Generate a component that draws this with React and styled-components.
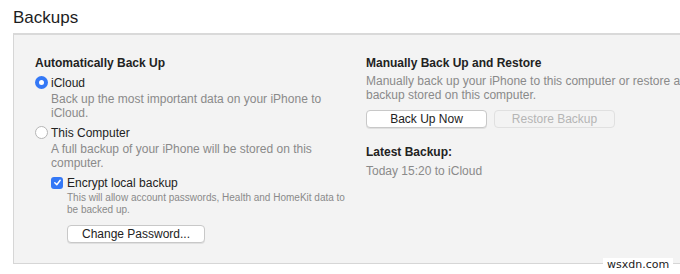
import React from "react";
import styled, { createGlobalStyle } from "styled-components";

const GlobalStyle = createGlobalStyle`
  html, body {
    margin: 0;
    padding: 0;
    background: #ffffff;
    font-family: "Liberation Sans", Arial, sans-serif;
    color: #222;
  }
`;

function Radio({ checked, label }) {
  return (
    <OptionRow>
      <RadioDot checked={checked} />
      <OptionLabel>{label}</OptionLabel>
    </OptionRow>
  );
}

function Check({ label }) {
  return (
    <OptionRow>
      <CheckBox>
        <svg width="9" height="9" viewBox="0 0 10 10">
          <path
            d="M2 5.3 L4.2 7.5 L8 2.5"
            fill="none"
            stroke="#fff"
            strokeWidth="1.6"
            strokeLinecap="round"
            strokeLinejoin="round"
          />
        </svg>
      </CheckBox>
      <OptionLabel>{label}</OptionLabel>
    </OptionRow>
  );
}

export default function App() {
  return (
    <Page>
      <GlobalStyle />
      <Title>Backups</Title>
      <Panel>
        <Column>
          <Heading>Automatically Back Up</Heading>
          <Radio checked label="iCloud" />
          <Desc>
            Back up the most important data on your iPhone to
            <br />
            iCloud.
          </Desc>
          <Radio label="This Computer" />
          <Desc>
            A full backup of your iPhone will be stored on this
            <br />
            computer.
          </Desc>
          <Nested>
            <Check label="Encrypt local backup" />
            <SmallDesc>
              This will allow account passwords, Health and HomeKit data to
              <br />
              be backed up.
            </SmallDesc>
            <Button width="138px" indent="16px">
              Change Password...
            </Button>
          </Nested>
        </Column>
        <Column>
          <Heading>Manually Back Up and Restore</Heading>
          <RightDesc>
            Manually back up your iPhone to this computer or restore a
            <br />
            backup stored on this computer.
          </RightDesc>
          <ButtonRow>
            <Button width="121px">Back Up Now</Button>
            <Button width="121px" disabled>
              Restore Backup
            </Button>
          </ButtonRow>
          <Heading>Latest Backup:</Heading>
          <Status>Today 15:20 to iCloud</Status>
        </Column>
        <Watermark>wsxdn.com</Watermark>
      </Panel>
    </Page>
  );
}

const Page = styled.div`
  width: 680px;
  height: 274px;
  overflow: hidden;
  padding: 8px 0 0 13px;
  box-sizing: border-box;
`;

const Title = styled.div`
  font-size: 17px;
  line-height: 20px;
  color: #1d1d1d;
  margin-bottom: 5px;
`;

const Panel = styled.div`
  position: relative;
  width: 700px;
  height: 231px;
  box-sizing: border-box;
  background: #f3f3f3;
  border: 1px solid #d6d6d6;
  border-top: 2px solid #d9d9d9;
  border-right: none;
  display: grid;
  grid-template-columns: 331px 1fr;
  padding: 21px 0 0 21px;
`;

const Column = styled.div`
  display: flex;
  flex-direction: column;
  align-items: flex-start;
`;

const Heading = styled.div`
  font-size: 12px;
  font-weight: bold;
  line-height: 15px;
  color: #222;
  margin-bottom: 3px;
`;

const OptionRow = styled.div`
  display: flex;
  align-items: center;
  height: 17px;
`;

const RadioDot = styled.span`
  box-sizing: border-box;
  width: 13px;
  height: 13px;
  border-radius: 50%;
  margin-right: 3px;
  background: ${(p) => (p.checked ? "#3478f6" : "#ffffff")};
  border: ${(p) => (p.checked ? "none" : "1px solid #b5b5b5")};
  display: flex;
  align-items: center;
  justify-content: center;
  &::after {
    content: "";
    display: ${(p) => (p.checked ? "block" : "none")};
    width: 5px;
    height: 5px;
    border-radius: 50%;
    background: #fff;
  }
`;

const CheckBox = styled.span`
  width: 12px;
  height: 12px;
  border-radius: 3px;
  background: #3478f6;
  margin-right: 4px;
  display: flex;
  align-items: center;
  justify-content: center;
`;

const OptionLabel = styled.span`
  font-size: 12px;
  color: #222;
`;

const Desc = styled.div`
  font-size: 12px;
  line-height: 14px;
  color: #8a8a8a;
  margin: 1px 0 4px 16px;
`;

const RightDesc = styled(Desc)`
  margin: 0 0 8px 0;
`;

const Nested = styled.div`
  margin-left: 16px;
  display: flex;
  flex-direction: column;
  align-items: flex-start;
`;

const SmallDesc = styled.div`
  font-size: 10px;
  line-height: 12px;
  color: #8a8a8a;
  margin: 1px 0 9px 16px;
`;

const Button = styled.div`
  box-sizing: border-box;
  width: ${(p) => p.width};
  height: 18px;
  margin-left: ${(p) => p.indent || "0"};
  border-radius: 4px;
  background: ${(p) => (p.disabled ? "#f3f3f3" : "#ffffff")};
  border: 1px solid ${(p) => (p.disabled ? "#e0e0e0" : "#c8c8c8")};
  box-shadow: ${(p) => (p.disabled ? "none" : "0 1px 0 rgba(0,0,0,0.08)")};
  color: ${(p) => (p.disabled ? "#b5b5b5" : "#222")};
  font-size: 12px;
  display: flex;
  align-items: center;
  justify-content: center;
`;

const ButtonRow = styled.div`
  display: flex;
  gap: 7px;
  margin-bottom: 17px;
`;

const Status = styled.div`
  font-size: 12px;
  color: #8a8a8a;
  margin-top: 1px;
`;

const Watermark = styled.div`
  position: absolute;
  left: 589px;
  bottom: -8px;
  padding: 0 4px;
  line-height: 13px;
  background: #ffffff;
  font-family: "DejaVu Sans", sans-serif;
  font-size: 11px;
  color: #222;
`;
